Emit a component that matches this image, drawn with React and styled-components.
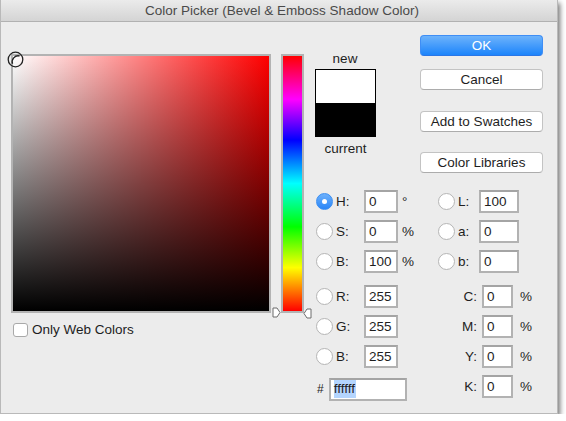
import React from 'react'
import styled, { createGlobalStyle } from 'styled-components'

const GlobalStyle = createGlobalStyle`
  html, body {
    margin: 0;
    padding: 0;
    background: #ffffff;
  }
  body {
    font-family: "Liberation Sans", Arial, sans-serif;
    font-size: 13px;
    color: #1e1e1e;
  }
`

const Window = styled.div`
  box-sizing: border-box;
  width: 558px;
  height: 414px;
  background: #ececec;
  border: 1px solid #b9b9b9;
  border-top: none;
  box-shadow: 2px 3px 5px rgba(0, 0, 0, 0.55);
  display: flex;
  flex-direction: column;
`

const TitleBar = styled.div`
  height: 22px;
  box-sizing: border-box;
  background: linear-gradient(#ebebeb, #d4d4d4);
  border-bottom: 1px solid #b1b1b1;
  display: flex;
  align-items: center;
  justify-content: center;
  color: #4a4a4a;
  font-size: 13.5px;
  padding-left: 6px;
`

const Body = styled.div`
  display: flex;
  padding: 13px 0 0 10px;
`

const LeftPane = styled.div`
  width: 293px;
  padding-top: 19px;
  display: flex;
  flex-direction: column;
`

const PickerRow = styled.div`
  display: flex;
  gap: 10px;
`

const FieldWrap = styled.div`
  position: relative;
`

const Field = styled.div`
  width: 256px;
  height: 255px;
  border: 2px solid #b3b3b3;
  background:
    linear-gradient(to top, #000 0%, rgba(0, 0, 0, 0) 100%),
    linear-gradient(to right, #fff 0%, #f00 100%);
`

const HueBar = styled.div`
  width: 19px;
  height: 255px;
  border: 2px solid #b3b3b3;
  background: linear-gradient(
    to bottom,
    #ff0000 0%,
    #ff00ff 17%,
    #0000ff 33%,
    #00ffff 50%,
    #00ff00 67%,
    #ffff00 83%,
    #ff0000 100%
  );
`

const Marker = styled.svg`
  position: absolute;
  top: ${p => p.$top}px;
  left: ${p => p.$left}px;
`

const CheckRow = styled.label`
  display: flex;
  align-items: center;
  gap: 4px;
  margin-top: 9px;
  margin-left: 2px;
  font-size: 13.5px;
`

const CheckBox = styled.span`
  width: 13px;
  height: 12px;
  border: 1px solid #a9a9a9;
  border-radius: 3px;
  background: #fff;
`

const RightPane = styled.div`
  width: 228px;
  margin-left: 11px;
  display: flex;
  flex-direction: column;
`

const TopRow = styled.div`
  display: flex;
  justify-content: space-between;
`

const SwatchCol = styled.div`
  width: 61px;
  padding-top: 16px;
  display: flex;
  flex-direction: column;
  align-items: center;
  font-size: 13.5px;
`

const SwatchLabel = styled.div`
  line-height: 15px;
  margin-top: ${p => p.$gap || 0}px;
  margin-left: ${p => p.$shift || 0}px;
`

const Swatch = styled.div`
  box-sizing: border-box;
  width: 61px;
  height: 68px;
  margin-top: 3px;
  border: 1px solid #000;
  background: linear-gradient(#fff 0, #fff 33px, #000 33px);
`

const ButtonCol = styled.div`
  width: 123px;
  display: flex;
  flex-direction: column;
`

const Button = styled.button`
  box-sizing: border-box;
  height: 21px;
  margin-top: ${p => p.$gap || 0}px;
  border-radius: 4px;
  font-family: inherit;
  font-size: 13.5px;
  padding: 0;
  border: 1px solid ${p => (p.$primary ? '#3f8ef5' : '#c3c3c3')};
  border-bottom-color: ${p => (p.$primary ? '#2a76e6' : '#acacac')};
  color: ${p => (p.$primary ? '#fff' : '#1e1e1e')};
  background: ${p => (p.$primary ? 'linear-gradient(#6db3fb, #1c84fb)' : '#ffffff')};
`

const Fields = styled.div`
  display: flex;
  margin-top: 13px;
`

const Column = styled.div`
  width: ${p => p.$width}px;
  display: flex;
  flex-direction: column;
`

const Row = styled.div`
  height: 30px;
  display: flex;
  align-items: center;
  margin-top: ${p => p.$gap || 0}px;
  font-size: 13.5px;
`

const Radio = styled.span`
  box-sizing: border-box;
  width: 17px;
  height: 17px;
  border-radius: 50%;
  margin-left: ${p => p.$indent || 0}px;
  display: flex;
  align-items: center;
  justify-content: center;
  border: 1px solid ${p => (p.$on ? '#3a8ef2' : '#b5b5b5')};
  background: ${p => (p.$on ? 'linear-gradient(#6cb0fb, #2a86f8)' : '#fff')};
  &::after {
    content: '';
    width: 5px;
    height: 5px;
    border-radius: 50%;
    background: #fff;
    display: ${p => (p.$on ? 'block' : 'none')};
  }
`

const Label = styled.span`
  width: ${p => p.$width}px;
  margin-left: ${p => p.$indent || 0}px;
  margin-right: ${p => p.$after || 0}px;
  text-align: ${p => p.$align || 'left'};
`

const Input = styled.div`
  box-sizing: border-box;
  width: ${p => p.$width}px;
  height: 23px;
  border: 2px solid #b2b2b2;
  border-top-color: #a4a4a4;
  background: #fff;
  display: flex;
  align-items: center;
  padding-left: 3px;
  font-size: 13.5px;
`

const Unit = styled.span`
  margin-left: ${p => p.$indent}px;
`

const Selected = styled.span`
  background: #b4d5fe;
  line-height: 18px;
  padding-right: 1px;
`

const Hash = styled.span`
  margin-left: 2px;
  margin-right: 5px;
  font-size: 12px;
`

function CursorRing() {
  return (
    <Marker $top={-3} $left={-4} width="17" height="17" viewBox="0 0 17 17">
      <circle cx="8.5" cy="8.5" r="7.3" fill="none" stroke="#222" strokeWidth="1.3" />
      <path d="M5.5 12.8 A6 6 0 0 1 12.5 5" fill="none" stroke="#222" strokeWidth="1.4" />
    </Marker>
  )
}

function Pointer({ left, top, flip }) {
  return (
    <Marker $top={top} $left={left} width="9" height="11" viewBox="0 0 9 11">
      <path
        d={flip ? 'M8 1 L8 10 L4 10 L1 5.5 L4 1 Z' : 'M1 1 L1 10 L5 10 L8 5.5 L5 1 Z'}
        fill="#fff"
        stroke="#6d6d6d"
        strokeWidth="1"
      />
    </Marker>
  )
}

const hsb = [
  { key: 'H', value: '0', unit: '°', on: true },
  { key: 'S', value: '0', unit: '%' },
  { key: 'B', value: '100', unit: '%' },
]
const rgb = [
  { key: 'R', value: '255' },
  { key: 'G', value: '255' },
  { key: 'B', value: '255' },
]
const lab = [
  { key: 'L', value: '100' },
  { key: 'a', value: '0' },
  { key: 'b', value: '0' },
]
const cmyk = ['C', 'M', 'Y', 'K']

export default function App() {
  return (
    <>
      <GlobalStyle />
      <Window>
        <TitleBar>Color Picker (Bevel &amp; Emboss Shadow Color)</TitleBar>
        <Body>
          <LeftPane>
            <PickerRow>
              <FieldWrap>
                <Field />
                <CursorRing />
                <Pointer left={261} top={253} />
              </FieldWrap>
              <FieldWrap>
                <HueBar />
                <Pointer left={22} top={254} flip />
              </FieldWrap>
            </PickerRow>
            <CheckRow>
              <CheckBox />
              Only Web Colors
            </CheckRow>
          </LeftPane>

          <RightPane>
            <TopRow>
              <SwatchCol>
                <SwatchLabel $shift={-1}>new</SwatchLabel>
                <Swatch />
                <SwatchLabel $gap={4}>current</SwatchLabel>
              </SwatchCol>
              <ButtonCol>
                <Button $primary>OK</Button>
                <Button $gap={13}>Cancel</Button>
                <Button $gap={21}>Add to Swatches</Button>
                <Button $gap={20}>Color Libraries</Button>
              </ButtonCol>
            </TopRow>

            <Fields>
              <Column $width={123}>
                {hsb.map(f => (
                  <Row key={f.key}>
                    <Radio $on={f.on} $indent={1} />
                    <Label $width={28} $indent={3}>{f.key}:</Label>
                    <Input $width={34}>{f.value}</Input>
                    <Unit $indent={4}>{f.unit}</Unit>
                  </Row>
                ))}
                {rgb.map((f, i) => (
                  <Row key={f.key} $gap={i === 0 ? 5 : 0}>
                    <Radio $indent={1} />
                    <Label $width={28} $indent={3}>{f.key}:</Label>
                    <Input $width={34}>{f.value}</Input>
                  </Row>
                ))}
                <Row $gap={3}>
                  <Hash>#</Hash>
                  <Input $width={78}>
                    <Selected>ffffff</Selected>
                  </Input>
                </Row>
              </Column>

              <Column $width={105}>
                {lab.map(f => (
                  <Row key={f.key}>
                    <Radio />
                    <Label $width={21} $indent={3}>{f.key}:</Label>
                    <Input $width={40}>{f.value}</Input>
                  </Row>
                ))}
                {cmyk.map((k, i) => (
                  <Row key={k} $gap={i === 0 ? 5 : 0}>
                    <Label $width={39} $align="right" $after={5}>{k}:</Label>
                    <Input $width={31}>0</Input>
                    <Unit $indent={7}>%</Unit>
                  </Row>
                ))}
              </Column>
            </Fields>
          </RightPane>
        </Body>
      </Window>
    </>
  )
}
